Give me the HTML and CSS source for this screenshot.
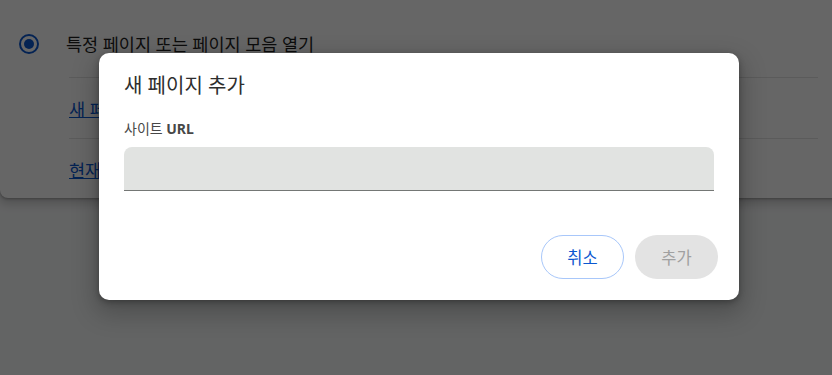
FILE: index.html
```
<!DOCTYPE html>
<html lang="ko">
<head>
<meta charset="utf-8">
<link rel="stylesheet" href="styles.css">
</head>
<body>
<div class="page">
  <div class="card">
    <div class="row radio-row">
      <span class="radio"><span class="dot"></span></span>
      <span class="radio-label">특정 페이지 또는 페이지 모음 열기</span>
    </div>
    <div class="row link-row"><a class="link" href="#">새 페이지 추가</a></div>
    <div class="row link-row"><a class="link" href="#">현재 페이지 사용</a></div>
  </div>
</div>
<div class="scrim"></div>
<div class="dialog">
  <div class="title">새 페이지 추가</div>
  <div class="field-label">사이트 <b>URL</b></div>
  <div class="input"></div>
  <div class="actions">
    <button class="btn cancel">취소</button>
    <button class="btn add">추가</button>
  </div>
</div>
</body>
</html>
```
FILE: styles.css
```
html, body {
  margin: 0;
  padding: 0;
}
body {
  width: 832px;
  height: 375px;
  overflow: hidden;
  background: #f8f9fa;
  font-family: "Noto Sans", "Noto Sans CJK KR", sans-serif;
  position: relative;
}
.card {
  width: 860px;
  height: 208px;
  margin-top: -10px;
  background: #fff;
  border-radius: 8px;
  box-shadow: 0 1px 3px rgba(0,0,0,0.3), 0 4px 8px 3px rgba(0,0,0,0.15);
  box-sizing: border-box;
  padding-top: 20px;
}
.row {
  display: flex;
  align-items: center;
}
.radio-row {
  height: 67px;
  padding-left: 19px;
  gap: 27px;
}
.radio {
  width: 20px;
  height: 20px;
  box-sizing: border-box;
  border: 2px solid #0b57d0;
  border-radius: 50%;
  display: flex;
  align-items: center;
  justify-content: center;
}
.dot {
  width: 10px;
  height: 10px;
  border-radius: 50%;
  background: #0b57d0;
}
.radio-label {
  font-size: 17.5px;
  color: #1f1f1f;
}
.link-row {
  height: 60px;
  margin-left: 69px;
  width: 749px;
  border-top: 1px solid #e3e3e3;
}
.link {
  color: #0b57d0;
  font-size: 17.5px;
  text-decoration: underline;
}
.scrim {
  position: absolute;
  inset: 0;
  background: rgba(0,0,0,0.6);
}
.dialog {
  position: absolute;
  left: 99px;
  top: 53px;
  width: 640px;
  height: 247px;
  box-sizing: border-box;
  background: #fff;
  border-radius: 10px;
  padding: 21px 25px 20px 25px;
  display: flex;
  flex-direction: column;
  box-shadow: 0 10px 24px 4px rgba(0,0,0,0.22), 0 2px 6px rgba(0,0,0,0.3);
}
.title {
  font-size: 20px;
  line-height: 24px;
  color: #2e2e2e;
}
.field-label {
  margin-top: 23px;
  font-size: 14px;
  line-height: 16px;
  color: #474747;
}
.field-label b {
  font-weight: 700;
}
.input {
  margin-top: 10px;
  height: 44px;
  box-sizing: border-box;
  background: #e1e3e1;
  border-radius: 8px 8px 0 0;
  border-bottom: 1px solid #747775;
}
.actions {
  margin-top: 44px;
  margin-right: -4px;
  display: flex;
  justify-content: flex-end;
  gap: 11px;
}
.btn {
  width: 83px;
  height: 44px;
  border-radius: 22px;
  font-family: "Noto Sans", "Noto Sans CJK KR", sans-serif;
  font-size: 16.5px;
  padding: 0;
  box-sizing: border-box;
}
.cancel {
  background: #fff;
  border: 1px solid #a8c7fa;
  color: #0b57d0;
}
.add {
  background: #e3e3e3;
  border: none;
  color: #a0a0a0;
}
```
